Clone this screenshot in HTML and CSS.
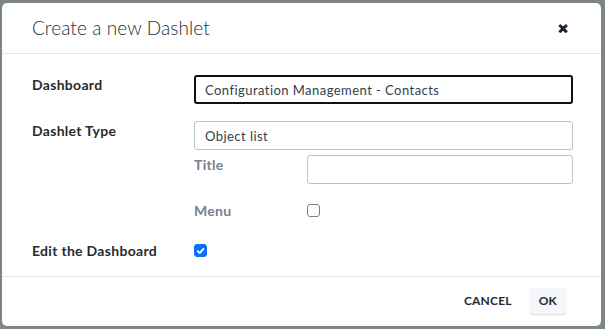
FILE: index.html
```html
<!DOCTYPE html>
<html>
<head>
<meta charset="utf-8">
<link rel="stylesheet" href="styles.css">
</head>
<body>
<div class="backdrop">
  <div class="dialog">
    <div class="header">
      <h1 class="title">Create a new Dashlet</h1>
      <span class="close">&#x2715;</span>
    </div>
    <div class="body">
      <div class="row row-dashboard">
        <div class="label">Dashboard</div>
        <div class="field"><div class="input focused">Configuration Management - Contacts</div></div>
      </div>
      <div class="row row-type">
        <div class="label">Dashlet Type</div>
        <div class="field">
          <div class="input">Object list</div>
          <div class="sub">
            <div class="subrow subrow-title">
              <div class="sublabel">Title</div>
              <div class="input empty"></div>
            </div>
            <div class="subrow subrow-menu">
              <div class="sublabel">Menu</div>
              <span class="check"></span>
            </div>
          </div>
        </div>
      </div>
      <div class="row row-edit">
        <div class="label">Edit the Dashboard</div>
        <div class="field"><span class="check checked"><svg viewBox="0 0 12 12" width="12" height="12"><path d="M3 6.2 L5.1 8.3 L9.2 3.8" fill="none" stroke="#fff" stroke-width="2" stroke-linecap="round" stroke-linejoin="round"/></svg></span></div>
      </div>
    </div>
    <div class="footer">
      <span class="btn">CANCEL</span>
      <span class="btn ok">OK</span>
    </div>
  </div>
</div>
</body>
</html>
```
FILE: styles.css
```css
* { box-sizing: border-box; }
html, body { margin: 0; padding: 0; }
body {
  width: 605px;
  height: 329px;
  overflow: hidden;
  background: #7e8588;
  font-family: "Lato", "Open Sans", sans-serif;
  color: #212529;
}
.backdrop {
  width: 605px;
  height: 329px;
  padding: 3px 3px 0 2px;
}
.dialog {
  background: #fff;
  width: 599px;
  height: 323px;
  border-radius: 5px;
  display: flex;
  flex-direction: column;
}
.header {
  height: 51px;
  border-bottom: 1px solid #e3e6ea;
  display: flex;
  align-items: center;
  justify-content: space-between;
  padding: 0 33px 0 30px;
}
.title {
  margin: 0;
  font-size: 19px;
  font-weight: 300;
  color: #2b2f33;
  letter-spacing: 0.1px;
  padding-bottom: 1px;
}
.close {
  font-size: 12px;
  font-weight: 900;
  color: #1f2329;
  -webkit-text-stroke: 1.2px #1f2329;
}
.body {
  flex: 1;
  padding: 21px 28px 0 30px;
  border-bottom: 1px solid #e3e6ea;
}
.row {
  display: flex;
}
.label {
  width: 162px;
  font-size: 14px;
  font-weight: 700;
  color: #272b30;
  letter-spacing: 0.3px;
}
.field { flex: 1; }
.input {
  height: 29px;
  border: 1px solid #b6c2cf;
  border-radius: 3px;
  font-size: 13px;
  color: #34404c;
  padding: 0 10px;
  display: flex;
  align-items: center;
  letter-spacing: 0.45px;
}
.input.focused {
  border: 2px solid #111;
  padding-left: 9px;
}
.row-dashboard .label { padding-top: 1px; }
.row-type { margin-top: 17px; }
.row-type .label { padding-top: 1px; }
.sub { margin-top: 5px; }
.subrow { display: flex; }
.sublabel {
  width: 113px;
  font-size: 14px;
  font-weight: 700;
  color: #78808e;
  letter-spacing: 0.3px;
}
.subrow-title .input { flex: 1; }
.subrow-title .sublabel { padding-top: 1px; }
.subrow-menu { margin-top: 18px; align-items: center; }
.check {
  display: inline-block;
  width: 13px;
  height: 13px;
  border: 1px solid #7b7f84;
  border-radius: 3px;
  background: #fff;
}
.check.checked {
  background: #0d6efd;
  border-color: #0d6efd;
  display: flex;
  align-items: center;
  justify-content: center;
}
.check.checked svg { display: block; }
.row-edit { margin-top: 23px; align-items: center; }
.row-edit .field { display: flex; }
.footer {
  height: 49px;
  display: flex;
  align-items: center;
  justify-content: flex-end;
  padding: 0 35px 2px 0;
  gap: 18px;
}
.btn {
  font-size: 12px;
  font-weight: 700;
  color: #1f2a36;
  letter-spacing: 0.2px;
}
.ok {
  background: #f4f6f8;
  border-radius: 3px;
  height: 26px;
  padding: 0 9px;
  display: flex;
  align-items: center;
  box-shadow: 0 1px 2px rgba(0,0,0,0.15);
}
```
